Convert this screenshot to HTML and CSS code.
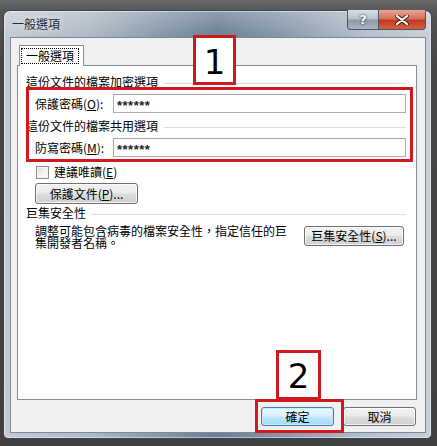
FILE: index.html
```html
<!DOCTYPE html>
<html lang="zh-Hant">
<head>
<meta charset="utf-8">
<title>一般選項</title>
<link rel="stylesheet" href="styles.css">
</head>
<body>
<div class="desktop">
  <div class="window">
    <div class="titlebar">
      <span class="title">一般選項</span>
      <div class="caption-buttons">
        <div class="cap help">?</div>
        <div class="cap close">
          <svg width="14" height="10" viewBox="0 0 14 10"><path d="M2 1 L12 9 M12 1 L2 9" stroke="#4a1a10" stroke-width="4" stroke-linecap="round"/><path d="M2 1 L12 9 M12 1 L2 9" stroke="#ffffff" stroke-width="2.2" stroke-linecap="round"/></svg>
        </div>
      </div>
    </div>
    <div class="client">
      <div class="tabs">
        <div class="tab"><span class="focus">一般選項</span></div>
      </div>
      <div class="panel">
        <div class="grouphead"><span>這份文件的檔案加密選項</span><i class="rule"></i></div>
        <div class="row">
          <label class="lbl">保護密碼(<u>O</u>):</label>
          <div class="input">******</div>
        </div>
        <div class="grouphead g2"><span>這份文件的檔案共用選項</span><i class="rule"></i></div>
        <div class="row">
          <label class="lbl">防寫密碼(<u>M</u>):</label>
          <div class="input">******</div>
        </div>
        <div class="check-row">
          <span class="checkbox"></span>
          <span>建議唯讀(<u>E</u>)</span>
        </div>
        <div class="btn protect">保護文件(<u>P</u>)...</div>
        <div class="grouphead g3"><span>巨集安全性</span><i class="rule"></i></div>
        <div class="macro-row">
          <p class="desc">調整可能包含病毒的檔案安全性，指定信任的巨集開發者名稱。</p>
          <div class="btn macro">巨集安全性(<u>S</u>)...</div>
        </div>
      </div>
      <div class="footer">
        <div class="btn ok">確定</div>
        <div class="btn cancel">取消</div>
      </div>
    </div>
  </div>
  <div class="mark num1">1</div>
  <div class="mark frame-pw"></div>
  <div class="mark num2">2</div>
  <div class="mark frame-ok"></div>
</div>
</body>
</html>
```

FILE: styles.css
```css
* { box-sizing: border-box; }
html, body { margin: 0; padding: 0; }
body {
  width: 437px;
  height: 446px;
  overflow: hidden;
  background: #4a4a4a;
  font-family: "Noto Sans CJK TC", "Microsoft JhengHei", sans-serif;
  font-size: 12px;
  color: #000;
}
.desktop {
  position: relative;
  width: 437px;
  height: 446px;
  padding: 10px 0 0 3px;
  background: linear-gradient(180deg, #6a6a6a 0px, #555 12px, #474747 60px, #404040 100%);
}
.window {
  width: 429px;
  height: 429px;
  border: 1px solid #3b4654;
  border-radius: 7px 7px 5px 5px;
  background:
    linear-gradient(180deg, rgba(255,255,255,0.25) 0px, rgba(255,255,255,0) 26px),
    linear-gradient(90deg, #c3cbd3 0%, #aeb9c4 20%, #7f91a3 40%, #6a7e92 50%, #8597a8 65%, #b5c0ca 85%, #c7ced6 100%);
  padding: 0 5px 5px 6px;
  display: flex;
  flex-direction: column;
  box-shadow: inset 0 0 0 1px rgba(255,255,255,0.45);
}
.titlebar {
  height: 26px;
  display: flex;
  align-items: flex-start;
  justify-content: space-between;
}
.title {
  margin-top: 6px;
  padding-left: 2px;
  line-height: 14px;
  font-size: 12px;
  color: #1f2a36;
  text-shadow: 0 0 6px rgba(255,255,255,0.9);
}
.caption-buttons {
  display: flex;
  margin-right: 0px;
  margin-top: -1px;
}
.cap {
  height: 20px;
  display: flex;
  align-items: center;
  justify-content: center;
  border: 1px solid #4a5664;
  border-top: none;
}
.help {
  width: 31px;
  border-radius: 0 0 0 4px;
  border-right: none;
  background: linear-gradient(180deg, #d9dfe5 0%, #b8c2cc 45%, #8d9aa8 55%, #a9b5c1 100%);
  color: #fff;
  font-family: "DejaVu Sans", sans-serif;
  font-weight: bold;
  font-size: 13px;
  text-shadow: 0 0 2px #2a3440, 0 0 1px #2a3440;
}
.close {
  width: 48px;
  border-radius: 0 0 4px 0;
  background: linear-gradient(180deg, #e8a597 0%, #d5705c 45%, #c0391f 55%, #d8623f 100%);
}
.client {
  flex: 1;
  background: #f0f0f0;
  border: 1px solid #7d8a98;
  padding: 7px 8px 0 6px;
  display: flex;
  flex-direction: column;
}
.tabs {
  display: flex;
  padding-left: 2px;
  height: 20px;
  position: relative;
  z-index: 1;
}
.tab {
  width: 65px;
  height: 21px;
  background: #fff;
  border: 1px solid #898c95;
  border-bottom: none;
  padding: 2px 4px 0 1px;
}
.focus {
  display: block;
  border: 1px dotted #000;
  line-height: 14px;
  text-align: center;
  font-size: 12px;
}
.panel {
  height: 335px;
  background: #fff;
  border: 1px solid #898c95;
  padding: 8px 10px 0 8px;
  display: flex;
  flex-direction: column;
}
.grouphead {
  display: flex;
  align-items: center;
  height: 16px;
  line-height: 16px;
  white-space: nowrap;
}
.grouphead span { padding-right: 6px; }
.rule {
  flex: 1;
  height: 1px;
  background: #d5dfe5;
  margin-top: 2px;
}
.g2 { margin-top: 5px; }
.g3 { margin-top: 1px; }
.row {
  display: flex;
  align-items: center;
  margin-top: 4px;
  height: 19px;
}
.lbl {
  width: 87px;
  padding-left: 9px;
  line-height: 19px;
  white-space: nowrap;
}
.input {
  flex: 1;
  height: 19px;
  border: 1px solid #abadb3;
  border-top-color: #a3a5aa;
  background: #fff;
  padding-left: 3px;
  font-family: "Liberation Sans", sans-serif;
  font-size: 13px;
  font-weight: bold;
  letter-spacing: 0.5px;
  line-height: 21px;
  color: #222;
}
.check-row {
  display: flex;
  align-items: center;
  margin-top: 8px;
  height: 14px;
  padding-left: 10px;
  line-height: 14px;
}
.checkbox {
  width: 13px;
  height: 13px;
  border: 1px solid #8e8f8f;
  background: linear-gradient(135deg, #dcdcdc 0%, #f4f4f4 60%, #fff 100%);
  box-shadow: inset 0 0 0 1px #f4f4f4;
  margin-right: 5px;
}
.btn {
  display: flex;
  align-items: center;
  justify-content: center;
  border: 1px solid #707070;
  border-radius: 3px;
  background: linear-gradient(180deg, #f2f2f2 0%, #ebebeb 48%, #dddddd 52%, #cfcfcf 100%);
  box-shadow: inset 0 0 0 1px rgba(255,255,255,0.75);
  font-size: 12px;
  line-height: 14px;
  white-space: nowrap;
  color: #000;
}
.protect {
  margin-top: 4px;
  margin-left: 9px;
  width: 103px;
  height: 21px;
}
.macro-row {
  display: flex;
  align-items: flex-start;
  margin-top: 4px;
  padding-left: 9px;
}
.desc {
  margin: 0;
  width: 256px;
  line-height: 12px;
  font-size: 12px;
}
.macro {
  margin-left: auto;
  margin-right: 2px;
  margin-top: 1px;
  width: 100px;
  height: 20px;
}
.footer {
  display: flex;
  justify-content: flex-end;
  gap: 9px;
  padding-top: 7px;
  padding-right: 1px;
}
.ok, .cancel {
  width: 73px;
  height: 19px;
}
.ok {
  border-color: #3c7fb1;
  background: linear-gradient(180deg, #eaf6fd 0%, #d9f0fc 48%, #bee6fd 52%, #a7d9f5 100%);
  box-shadow: inset 0 0 0 1px #c6eafc;
}
.mark {
  position: absolute;
  border: 3px solid #d0191c;
}
.num1, .num2 {
  background: #fff;
  font-family: "DejaVu Sans", sans-serif;
  font-size: 34px;
  display: flex;
  align-items: center;
  justify-content: center;
  color: #000;
}
.num1 { left: 193px; top: 35px; width: 43px; height: 50px; padding-top: 4px; }
.frame-pw { left: 26px; top: 87px; width: 387px; height: 75px; }
.num2 { left: 276px; top: 350px; width: 45px; height: 50px; padding-top: 2px; }
.frame-ok { left: 255px; top: 399px; width: 89px; height: 34px; }
```
